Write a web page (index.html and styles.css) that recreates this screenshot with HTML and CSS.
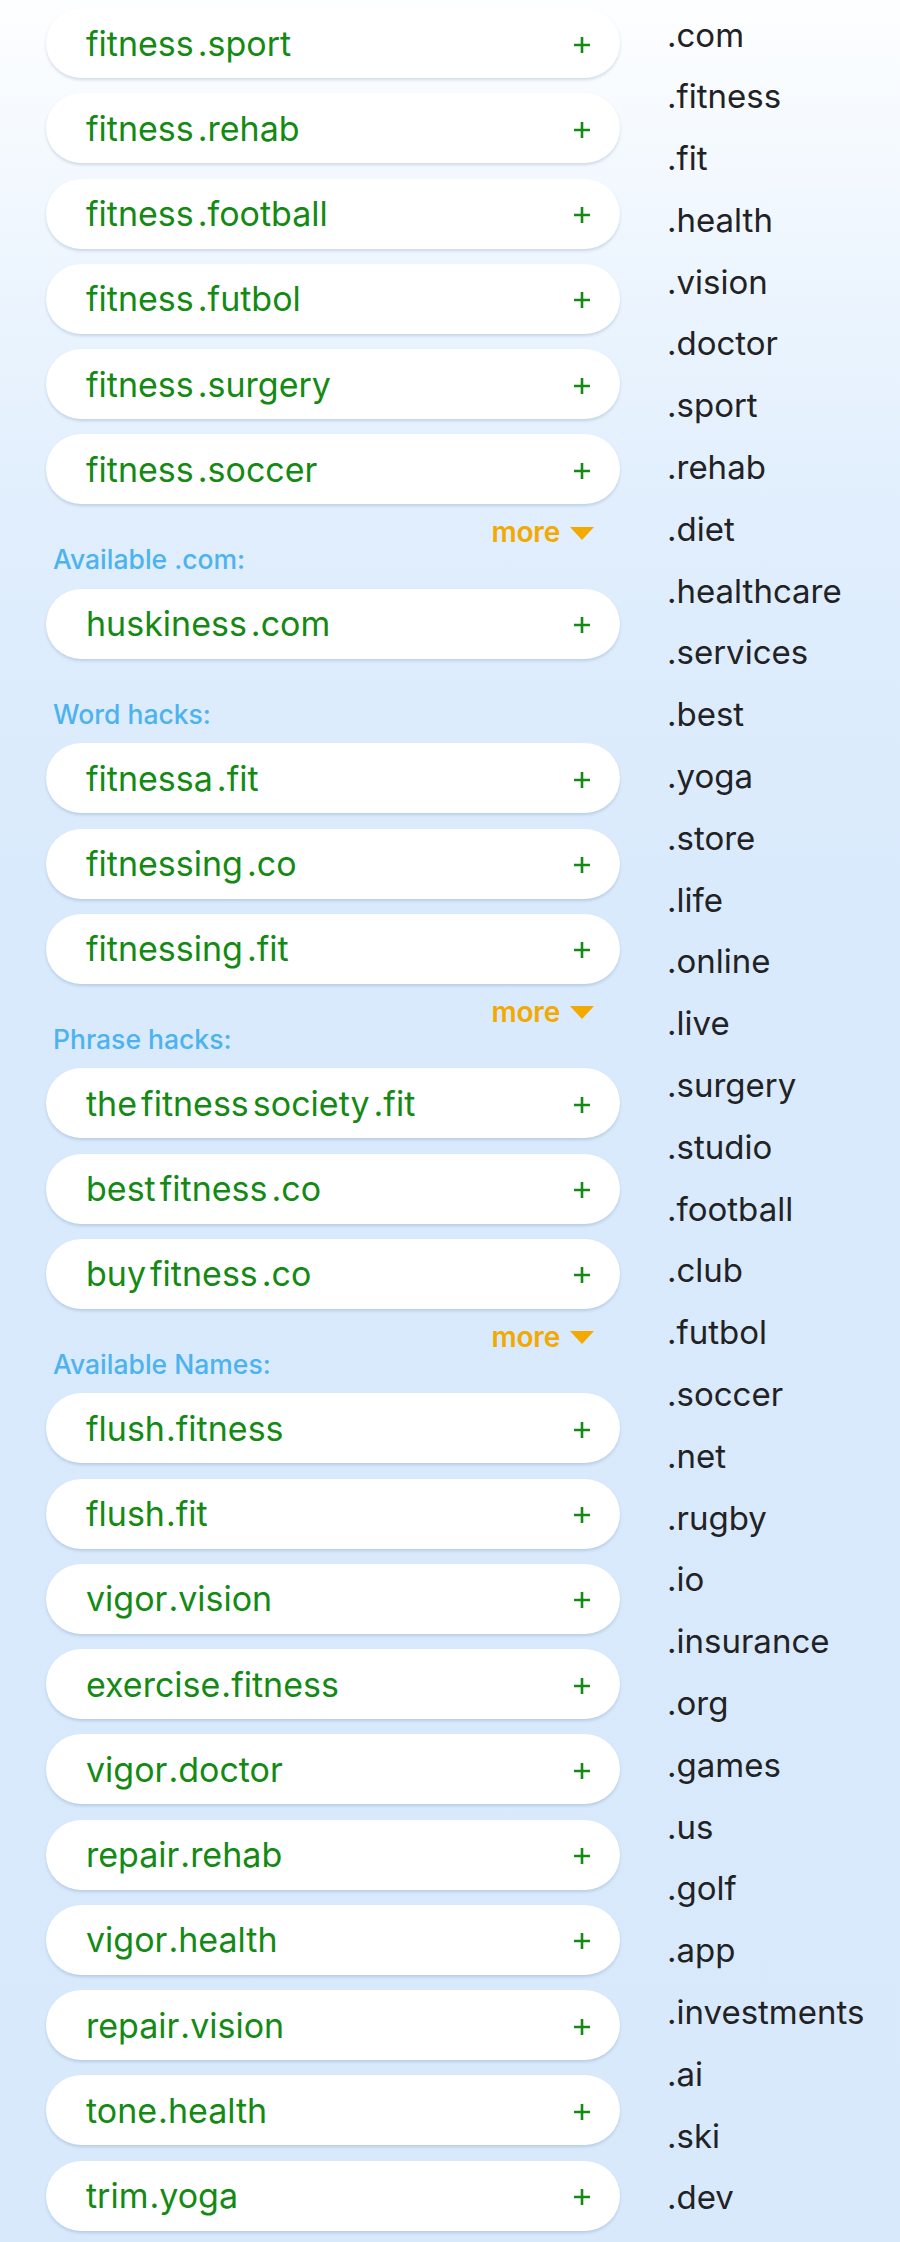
FILE: index.html
```html
<!DOCTYPE html>
<html>
<head>
<meta charset="utf-8">
<link rel="stylesheet" href="styles.css">
</head>
<body>
<div class="page">
  <div class="left">
    <div class="cards">
      <div class="card"><span class="name"><span>fitness</span><span class="p">.sport</span></span><svg class="plus" viewBox="0 0 18 18"><path d="M9 1v16M1 9h16"/></svg></div>
      <div class="card"><span class="name"><span>fitness</span><span class="p">.rehab</span></span><svg class="plus" viewBox="0 0 18 18"><path d="M9 1v16M1 9h16"/></svg></div>
      <div class="card"><span class="name"><span>fitness</span><span class="p">.football</span></span><svg class="plus" viewBox="0 0 18 18"><path d="M9 1v16M1 9h16"/></svg></div>
      <div class="card"><span class="name"><span>fitness</span><span class="p">.futbol</span></span><svg class="plus" viewBox="0 0 18 18"><path d="M9 1v16M1 9h16"/></svg></div>
      <div class="card"><span class="name"><span>fitness</span><span class="p">.surgery</span></span><svg class="plus" viewBox="0 0 18 18"><path d="M9 1v16M1 9h16"/></svg></div>
      <div class="card"><span class="name"><span>fitness</span><span class="p">.soccer</span></span><svg class="plus" viewBox="0 0 18 18"><path d="M9 1v16M1 9h16"/></svg></div>
    </div>
    <div class="more">more<span class="tri"></span></div>

    <div class="label">Available .com:</div>
    <div class="cards">
      <div class="card"><span class="name"><span>huskiness</span><span class="p">.com</span></span><svg class="plus" viewBox="0 0 18 18"><path d="M9 1v16M1 9h16"/></svg></div>
    </div>

    <div class="label spaced">Word hacks:</div>
    <div class="cards">
      <div class="card"><span class="name"><span>fitnessa</span><span class="p">.fit</span></span><svg class="plus" viewBox="0 0 18 18"><path d="M9 1v16M1 9h16"/></svg></div>
      <div class="card"><span class="name"><span>fitnessing</span><span class="p">.co</span></span><svg class="plus" viewBox="0 0 18 18"><path d="M9 1v16M1 9h16"/></svg></div>
      <div class="card"><span class="name"><span>fitnessing</span><span class="p">.fit</span></span><svg class="plus" viewBox="0 0 18 18"><path d="M9 1v16M1 9h16"/></svg></div>
    </div>
    <div class="more">more<span class="tri"></span></div>

    <div class="label">Phrase hacks:</div>
    <div class="cards">
      <div class="card"><span class="name"><span>the</span><span class="p">fitness</span><span class="p">society</span><span class="p">.fit</span></span><svg class="plus" viewBox="0 0 18 18"><path d="M9 1v16M1 9h16"/></svg></div>
      <div class="card"><span class="name"><span>best</span><span class="p">fitness</span><span class="p">.co</span></span><svg class="plus" viewBox="0 0 18 18"><path d="M9 1v16M1 9h16"/></svg></div>
      <div class="card"><span class="name"><span>buy</span><span class="p">fitness</span><span class="p">.co</span></span><svg class="plus" viewBox="0 0 18 18"><path d="M9 1v16M1 9h16"/></svg></div>
    </div>
    <div class="more">more<span class="tri"></span></div>

    <div class="label">Available Names:</div>
    <div class="cards">
      <div class="card"><span class="name"><span>flush</span><span class="q">.fitness</span></span><svg class="plus" viewBox="0 0 18 18"><path d="M9 1v16M1 9h16"/></svg></div>
      <div class="card"><span class="name"><span>flush</span><span class="q">.fit</span></span><svg class="plus" viewBox="0 0 18 18"><path d="M9 1v16M1 9h16"/></svg></div>
      <div class="card"><span class="name"><span>vigor</span><span class="q">.vision</span></span><svg class="plus" viewBox="0 0 18 18"><path d="M9 1v16M1 9h16"/></svg></div>
      <div class="card"><span class="name"><span>exercise</span><span class="q">.fitness</span></span><svg class="plus" viewBox="0 0 18 18"><path d="M9 1v16M1 9h16"/></svg></div>
      <div class="card"><span class="name"><span>vigor</span><span class="q">.doctor</span></span><svg class="plus" viewBox="0 0 18 18"><path d="M9 1v16M1 9h16"/></svg></div>
      <div class="card"><span class="name"><span>repair</span><span class="q">.rehab</span></span><svg class="plus" viewBox="0 0 18 18"><path d="M9 1v16M1 9h16"/></svg></div>
      <div class="card"><span class="name"><span>vigor</span><span class="q">.health</span></span><svg class="plus" viewBox="0 0 18 18"><path d="M9 1v16M1 9h16"/></svg></div>
      <div class="card"><span class="name"><span>repair</span><span class="q">.vision</span></span><svg class="plus" viewBox="0 0 18 18"><path d="M9 1v16M1 9h16"/></svg></div>
      <div class="card"><span class="name"><span>tone</span><span class="q">.health</span></span><svg class="plus" viewBox="0 0 18 18"><path d="M9 1v16M1 9h16"/></svg></div>
      <div class="card"><span class="name"><span>trim</span><span class="q">.yoga</span></span><svg class="plus" viewBox="0 0 18 18"><path d="M9 1v16M1 9h16"/></svg></div>
    </div>
  </div>

  <ul class="tlds">
    <li>.com</li><li>.fitness</li><li>.fit</li><li>.health</li><li>.vision</li><li>.doctor</li>
    <li>.sport</li><li>.rehab</li><li>.diet</li><li>.healthcare</li><li>.services</li><li>.best</li>
    <li>.yoga</li><li>.store</li><li>.life</li><li>.online</li><li>.live</li><li>.surgery</li>
    <li>.studio</li><li>.football</li><li>.club</li><li>.futbol</li><li>.soccer</li><li>.net</li>
    <li>.rugby</li><li>.io</li><li>.insurance</li><li>.org</li><li>.games</li><li>.us</li>
    <li>.golf</li><li>.app</li><li>.investments</li><li>.ai</li><li>.ski</li><li>.dev</li>
  </ul>
</div>
</body>
</html>
```

FILE: styles.css
```css
html, body {
  margin: 0;
  padding: 0;
}
body {
  width: 900px;
  height: 2242px;
  overflow: hidden;
  font-family: "Inter", "Liberation Sans", sans-serif;
  background: linear-gradient(to bottom, #fdfeff 0px, #eef6fe 250px, #e0eefd 520px, #d9eafc 900px, #d8e9fc 2242px);
}
.page {
  display: flex;
  align-items: flex-start;
  padding: 8px 0 0 46px;
}
.left {
  width: 574px;
  display: flex;
  flex-direction: column;
}
.cards {
  display: flex;
  flex-direction: column;
  gap: 15.25px;
}
.card {
  height: 70px;
  box-sizing: border-box;
  border-radius: 35px;
  background: #ffffff;
  box-shadow: 0 2px 3px rgba(40, 80, 130, 0.18);
  display: flex;
  align-items: center;
  justify-content: space-between;
  padding: 0 29px 0 40px;
}
.name {
  color: #148a14;
  font-size: 34px;
  letter-spacing: 0;
  white-space: nowrap;
}
.name .p {
  margin-left: 4px;
}
.name .q {
  margin-left: 1px;
}
.plus {
  width: 18px;
  height: 18px;
  margin-top: 3px;
  stroke: #148a14;
  stroke-width: 2.6;
  fill: none;
}
.more {
  height: 30px;
  margin-top: 13px;
  display: flex;
  align-items: center;
  justify-content: flex-end;
  padding-right: 26px;
  color: #f2a900;
  font-size: 28px;
  font-weight: 600;
  letter-spacing: -0.2px;
}
.tri {
  width: 0;
  height: 0;
  margin-left: 10px;
  margin-top: 2px;
  border-left: 12.5px solid transparent;
  border-right: 12.5px solid transparent;
  border-top: 13px solid #f2a900;
}
.label {
  height: 24px;
  line-height: 24px;
  margin: 0 0 17.5px 7px;
  color: #4db3ef;
  font-size: 26.5px;
  font-weight: 500;
}
.label.spaced {
  margin-top: 43px;
}
.tlds {
  list-style: none;
  margin: 0 0 0 47px;
  padding: 0;
  position: relative;
  top: -3.5px;
}
.tlds li {
  height: 61.8px;
  line-height: 61.8px;
  font-size: 33px;
  color: #222224;
  white-space: nowrap;
}
```
